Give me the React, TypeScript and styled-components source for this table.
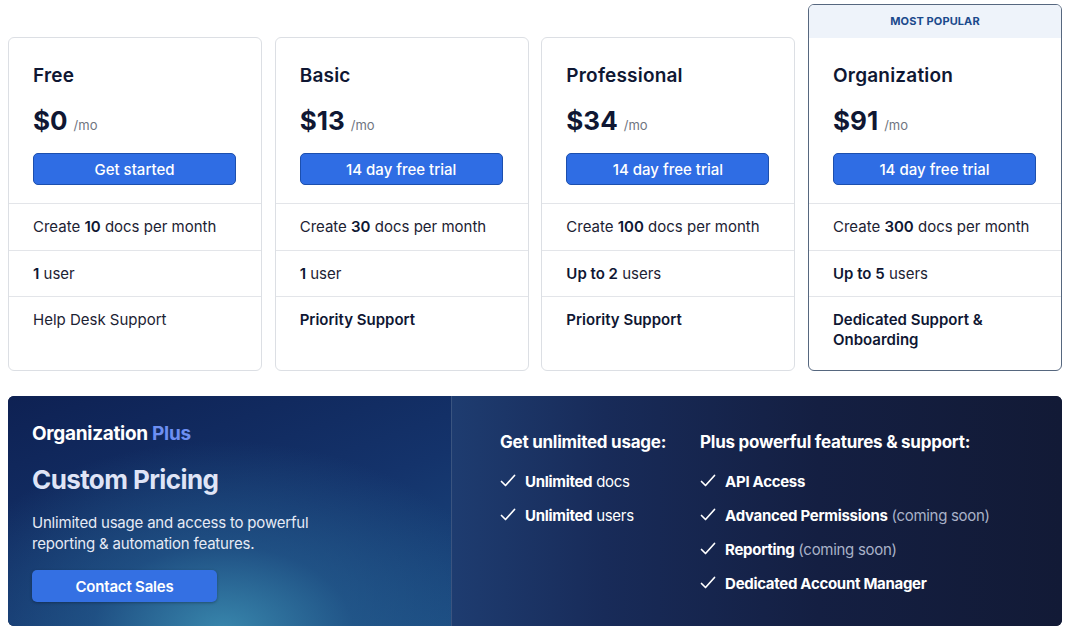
import React from "react";
import styled, { createGlobalStyle } from "styled-components";

const Global = createGlobalStyle`
  html, body { margin: 0; padding: 0; background: #ffffff; }
  body { font-family: Inter, "Noto Sans", sans-serif; color: #111a33; -webkit-font-smoothing: antialiased; }
  * { box-sizing: border-box; }
`;

const Page = styled.div`
  width: 1070px;
  height: 632px;
  padding: 4px 8px 0 8px;
  display: flex;
  flex-direction: column;
  gap: 25px;
`;

const CardRow = styled.div`
  display: grid;
  grid-template-columns: repeat(4, 1fr);
  column-gap: 12.7px;
  align-items: stretch;
`;

const Card = styled.div<{ $popular?: boolean }>`
  display: flex;
  flex-direction: column;
  border: 1px solid ${(p) => (p.$popular ? "#56677f" : "#dcdfe4")};
  border-radius: 6px;
  background: #fff;
  margin-top: ${(p) => (p.$popular ? "0" : "33px")};
  height: ${(p) => (p.$popular ? "367px" : "334px")};
  overflow: hidden;
`;

const Badge = styled.div`
  height: 33px;
  flex: none;
  background: #eef3fa;
  color: #1b4a8c;
  font-size: 11px;
  font-weight: 700;
  letter-spacing: 0.1px;
  display: flex;
  align-items: center;
  justify-content: center;
  padding-bottom: 2px;
`;

const CardHead = styled.div`
  padding: 26px 24px 18px 24px;
  display: flex;
  flex-direction: column;
`;

const PlanName = styled.div`
  font-size: 19px;
  font-weight: 600;
  line-height: 24px;
  color: #0f1733;
  letter-spacing: 0.2px;
`;

const PriceLine = styled.div`
  margin-top: 17px;
  display: flex;
  align-items: baseline;
  gap: 6px;
  line-height: 32px;
`;

const Price = styled.span`
  font-size: 26px;
  font-weight: 700;
  color: #0f1733;
`;

const Per = styled.span`
  font-size: 13px;
  color: #70757f;
`;

const PrimaryButton = styled.button`
  margin-top: 12px;
  height: 32px;
  width: 203px;
  border: 1px solid #1c4fae;
  border-radius: 5px;
  background: #2f6de4;
  color: #fff;
  font-family: Inter, sans-serif;
  font-size: 15px;
  font-weight: 500;
  cursor: pointer;
  padding: 0;
`;

const FeatureRow = styled.div`
  border-top: 1px solid #e3e5e9;
  padding: 13px 24px 10px 24px;
  font-size: 15px;
  line-height: 20px;
  min-height: 46.5px;
  color: #1c2233;
  & b { font-weight: 600; color: #0f1733; }
`;

const Banner = styled.div`
  display: grid;
  grid-template-columns: 444px 1fr;
  height: 230px;
  border-radius: 6px;
  overflow: hidden;
  background: #141d3b;
`;

const BannerLeft = styled.div`
  padding: 26px 24px 0 24px;
  display: flex;
  flex-direction: column;
  align-items: flex-start;
  background:
    radial-gradient(ellipse 290px 190px at 215px 235px, rgba(58, 138, 175, 0.95) 0%, rgba(38, 96, 145, 0.6) 45%, rgba(20, 45, 100, 0) 100%),
    linear-gradient(160deg, #0e2153 0%, #14336b 55%, #1b4a80 100%);
  border-right: 1px solid #3a5480;
`;

const PlusTitle = styled.div`
  font-size: 19px;
  font-weight: 700;
  line-height: 24px;
  color: #ffffff;
  letter-spacing: -0.3px;
  & span { color: #6d8ff2; }
`;

const CustomPricing = styled.div`
  margin-top: 18px;
  font-size: 26px;
  font-weight: 700;
  line-height: 32px;
  color: #dfe4f6;
  letter-spacing: -0.6px;
`;

const BannerText = styled.div`
  margin-top: 16px;
  font-size: 15px;
  line-height: 21px;
  color: #e6eaf5;
  letter-spacing: -0.2px;
`;

const ContactButton = styled.button`
  margin-top: 16px;
  width: 185px;
  height: 32px;
  border: none;
  border-radius: 5px;
  background: #3470e3;
  color: #fff;
  font-family: Inter, sans-serif;
  font-size: 15px;
  font-weight: 600;
  letter-spacing: -0.2px;
  box-shadow: 0 1px 3px rgba(0, 0, 0, 0.3);
  cursor: pointer;
`;

const BannerRight = styled.div`
  padding: 35px 0 0 48px;
  display: flex;
  gap: 34px;
  background: linear-gradient(90deg, #1e3c70 0%, #182b59 25%, #141f42 60%, #121a36 100%);
`;

const FeatureCol = styled.div`
  display: flex;
  flex-direction: column;
`;

const ColHeading = styled.div`
  font-size: 17px;
  font-weight: 700;
  line-height: 22px;
  color: #ffffff;
  letter-spacing: -0.25px;
  margin-bottom: 11px;
`;

const CheckItem = styled.div`
  display: flex;
  align-items: center;
  gap: 9px;
  height: 34px;
  font-size: 15px;
  color: #ffffff;
`;

const ItemLabel = styled.span`
  letter-spacing: -0.3px;
  & b { font-weight: 700; }
  & i { font-style: normal; color: #a9b2c8; }
`;

const CheckIcon = () => (
  <svg width="16" height="14" viewBox="0 0 16 14" fill="none">
    <path d="M1.5 7.5 L5.5 11.5 L14.5 1.5" stroke="#ffffff" strokeWidth="1.7" strokeLinecap="round" strokeLinejoin="round" />
  </svg>
);

type Plan = {
  name: string;
  price: string;
  cta: string;
  rows: React.ReactNode[];
  popular?: boolean;
};

const plans: Plan[] = [
  {
    name: "Free",
    price: "$0",
    cta: "Get started",
    rows: [
      <>Create <b>10</b> docs per month</>,
      <><b>1</b> user</>,
      <>Help Desk Support</>,
    ],
  },
  {
    name: "Basic",
    price: "$13",
    cta: "14 day free trial",
    rows: [
      <>Create <b>30</b> docs per month</>,
      <><b>1</b> user</>,
      <><b>Priority Support</b></>,
    ],
  },
  {
    name: "Professional",
    price: "$34",
    cta: "14 day free trial",
    rows: [
      <>Create <b>100</b> docs per month</>,
      <><b>Up to 2</b> users</>,
      <><b>Priority Support</b></>,
    ],
  },
  {
    name: "Organization",
    price: "$91",
    cta: "14 day free trial",
    popular: true,
    rows: [
      <>Create <b>300</b> docs per month</>,
      <><b>Up to 5</b> users</>,
      <><b>Dedicated Support &amp; Onboarding</b></>,
    ],
  },
];

const usage: React.ReactNode[] = [
  <><b>Unlimited</b> docs</>,
  <><b>Unlimited</b> users</>,
];

const extras: React.ReactNode[] = [
  <><b>API Access</b></>,
  <><b>Advanced Permissions</b> <i>(coming soon)</i></>,
  <><b>Reporting</b> <i>(coming soon)</i></>,
  <><b>Dedicated Account Manager</b></>,
];

export default function App() {
  return (
    <>
      <Global />
      <Page>
        <CardRow>
          {plans.map((p) => (
            <Card key={p.name} $popular={p.popular}>
              {p.popular && <Badge>MOST POPULAR</Badge>}
              <CardHead>
                <PlanName>{p.name}</PlanName>
                <PriceLine>
                  <Price>{p.price}</Price>
                  <Per>/mo</Per>
                </PriceLine>
                <PrimaryButton>{p.cta}</PrimaryButton>
              </CardHead>
              {p.rows.map((r, i) => (
                <FeatureRow key={i}>{r}</FeatureRow>
              ))}
            </Card>
          ))}
        </CardRow>
        <Banner>
          <BannerLeft>
            <PlusTitle>
              Organization <span>Plus</span>
            </PlusTitle>
            <CustomPricing>Custom Pricing</CustomPricing>
            <BannerText>
              Unlimited usage and access to powerful
              <br />
              reporting &amp; automation features.
            </BannerText>
            <ContactButton>Contact Sales</ContactButton>
          </BannerLeft>
          <BannerRight>
            <FeatureCol>
              <ColHeading>Get unlimited usage:</ColHeading>
              {usage.map((u, i) => (
                <CheckItem key={i}>
                  <CheckIcon />
                  <ItemLabel>{u}</ItemLabel>
                </CheckItem>
              ))}
            </FeatureCol>
            <FeatureCol>
              <ColHeading>Plus powerful features &amp; support:</ColHeading>
              {extras.map((u, i) => (
                <CheckItem key={i}>
                  <CheckIcon />
                  <ItemLabel>{u}</ItemLabel>
                </CheckItem>
              ))}
            </FeatureCol>
          </BannerRight>
        </Banner>
      </Page>
    </>
  );
}
